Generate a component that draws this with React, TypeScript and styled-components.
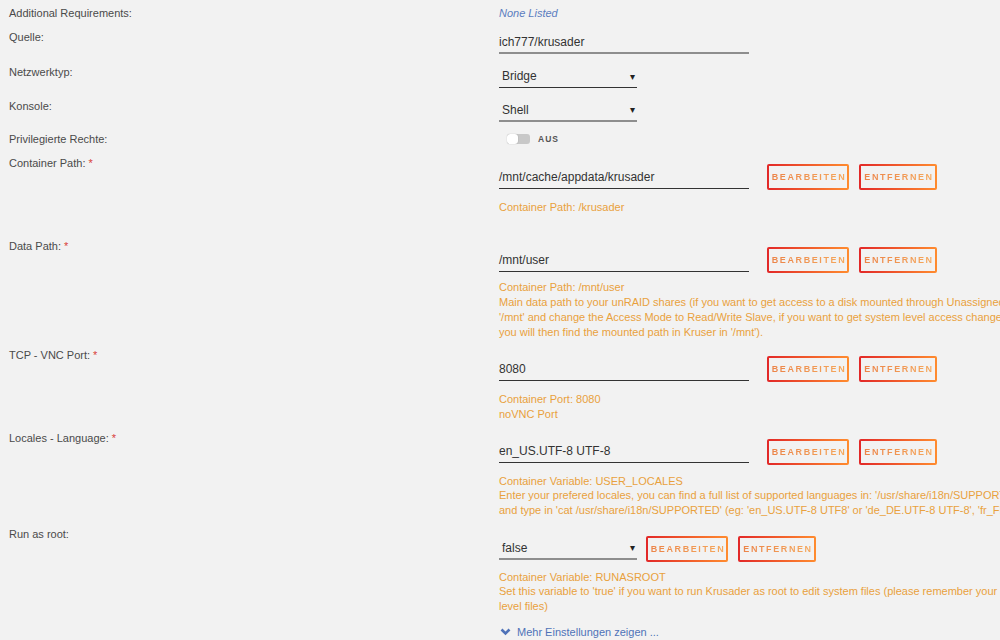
import React from 'react'
import styled, { createGlobalStyle } from 'styled-components'

const GlobalStyle = createGlobalStyle`
    html, body {
        margin: 0;
        padding: 0;
        background: #f2f2f2;
        overflow: hidden;
    }
    body {
        font-family: "Liberation Sans", Arial, sans-serif;
        color: #4f4f4f;
    }
`

const Page = styled.div`
    width: 1000px;
    height: 640px;
    overflow: hidden;
    padding: 6px 0 0 9px;
    box-sizing: border-box;
    display: flex;
    flex-direction: column;
`

const Row = styled.div<{ $space?: number }>`
    display: grid;
    grid-template-columns: 490px 1fr;
    align-items: start;
    margin-bottom: ${p => p.$space ?? 10}px;
`

const Label = styled.div`
    font-size: 11px;
    line-height: 14px;
    color: #4a4a4a;
    white-space: nowrap;
`

const Required = styled.span`
    color: #d9403a;
    margin-left: 3px;
`

const Content = styled.div<{ $offset?: number }>`
    display: flex;
    flex-direction: column;
    padding-top: ${p => p.$offset ?? 0}px;
    min-width: 0;
`

const Controls = styled.div<{ $gap?: number }>`
    display: flex;
    align-items: center;
    gap: ${p => p.$gap ?? 18}px;
`

const Muted = styled.div`
    font-size: 11px;
    line-height: 14px;
    font-style: italic;
    color: #5b7dc0;
`

const TextField = styled.div<{ $width?: number, $soft?: boolean }>`
    width: ${p => p.$width ?? 250}px;
    height: 23px;
    box-sizing: border-box;
    display: flex;
    align-items: center;
    font-size: 12px;
    color: #333;
    border-bottom: ${p => p.$soft ? '2px solid #8e8e8e' : '1px solid #333'};
    white-space: nowrap;
`

const SelectField = styled(TextField)`
    padding: 0 2px 0 3px;
    justify-content: space-between;
    &::after {
        content: "▾";
        font-size: 10px;
        color: #222;
    }
`

const Buttons = styled.div`
    display: flex;
    gap: 10px;
`

const Button = styled.div<{ $width: number }>`
    width: ${p => p.$width}px;
    height: 26px;
    box-sizing: border-box;
    display: flex;
    align-items: center;
    justify-content: center;
    border: 2px solid transparent;
    border-radius: 2px;
    background:
        linear-gradient(#f2f2f2, #f2f2f2) padding-box,
        linear-gradient(90deg, #e22828 0, #ff8c2f) border-box;
    font-size: 9px;
    font-weight: bold;
    letter-spacing: 1.6px;
    padding-left: 2px;
    span {
        background: linear-gradient(90deg, #ec8448 0, #f5a85c 100%);
        -webkit-background-clip: text;
        background-clip: text;
        color: transparent;
    }
`

const Switch = styled.div`
    display: flex;
    align-items: center;
    gap: 8px;
    padding-left: 8px;
    height: 14px;
`

const Track = styled.div`
    width: 23px;
    height: 10px;
    border-radius: 3px;
    background: #c8c8c8;
    position: relative;
    &::before {
        content: "";
        position: absolute;
        left: 0;
        top: 0;
        width: 11px;
        height: 10px;
        border-radius: 3px;
        background: #fff;
        box-shadow: 0 0 1px rgba(0, 0, 0, 0.35);
    }
`

const SwitchText = styled.span`
    font-size: 8.5px;
    font-weight: bold;
    letter-spacing: 1px;
    color: #555;
`

const Description = styled.div<{ $lift?: number }>`
    margin-top: ${p => 10 - (p.$lift ?? 0)}px;
    font-size: 11px;
    line-height: 14.7px;
    color: #e9a13d;
    white-space: nowrap;
`

const MoreLink = styled.div`
    display: flex;
    align-items: center;
    gap: 6px;
    margin-left: 491px;
    font-size: 11px;
    line-height: 14px;
    color: #4f72b8;
`

const Edit = () => (
    <Buttons>
        <Button $width={82}><span>BEARBEITEN</span></Button>
        <Button $width={78}><span>ENTFERNEN</span></Button>
    </Buttons>
)

type Entry = {
    label: string
    value: string
    lines: string[]
    space?: number
    lift?: number
}

const entries: Entry[] = [
    {
        label: 'Container Path:',
        value: '/mnt/cache/appdata/krusader',
        lines: ['Container Path: /krusader', '\u00a0'],
    },
    {
        label: 'Data Path:',
        value: '/mnt/user',
        lift: 3,
        space: 9,
        lines: [
            'Container Path: /mnt/user',
            "Main data path to your unRAID shares (if you want to get access to a disk mounted through Unassigned Devices change the path to",
            "'/mnt' and change the Access Mode to Read/Write Slave, if you want to get system level access change the path to '/'),",
            "you will then find the mounted path in Kruser in '/mnt').",
        ],
    },
    {
        label: 'TCP - VNC Port:',
        value: '8080',
        space: 9,
        lines: ['Container Port: 8080', 'noVNC Port'],
    },
    {
        label: 'Locales - Language:',
        value: 'en_US.UTF-8 UTF-8',
        lift: 1,
        space: 9,
        lines: [
            'Container Variable: USER_LOCALES',
            "Enter your prefered locales, you can find a full list of supported languages in: '/usr/share/i18n/SUPPORTED' (simply open up a console",
            "and type in 'cat /usr/share/i18n/SUPPORTED' (eg: 'en_US.UTF-8 UTF8' or 'de_DE.UTF-8 UTF-8', 'fr_FR.UTF-8 UTF-8')",
        ],
    },
]

const Chevron = () => (
    <svg width="11" height="8" viewBox="0 0 11 8">
        <polyline points="1.5,1.5 5.5,5.5 9.5,1.5" fill="none" stroke="#4f72b8" strokeWidth="2.6" />
    </svg>
)

export default function App() {
    return (
        <>
            <GlobalStyle />
            <Page>
                <Row>
                    <Label>Additional Requirements:</Label>
                    <Muted>None Listed</Muted>
                </Row>
                <Row $space={11}>
                    <Label>Quelle:</Label>
                    <Content $offset={1}>
                        <TextField $soft>ich777/krusader</TextField>
                    </Content>
                </Row>
                <Row $space={11}>
                    <Label>Netzwerktyp:</Label>
                    <Content>
                        <SelectField $width={138}>Bridge</SelectField>
                    </Content>
                </Row>
                <Row $space={10}>
                    <Label>Konsole:</Label>
                    <Content>
                        <SelectField $width={138} $soft>Shell</SelectField>
                    </Content>
                </Row>
                <Row $space={10}>
                    <Label>Privilegierte Rechte:</Label>
                    <Switch>
                        <Track />
                        <SwitchText>AUS</SwitchText>
                    </Switch>
                </Row>
                {entries.map(e => (
                    <Row key={e.label} $space={e.space}>
                        <Label>{e.label}<Required>*</Required></Label>
                        <Content $offset={8}>
                            <Controls>
                                <TextField>{e.value}</TextField>
                                <Edit />
                            </Controls>
                            <Description $lift={e.lift}>
                                {e.lines.map((l, i) => <div key={i}>{l}</div>)}
                            </Description>
                        </Content>
                    </Row>
                ))}
                <Row $space={11}>
                    <Label>Run as root:</Label>
                    <Content $offset={9}>
                        <Controls $gap={9}>
                            <SelectField $width={138} $soft>false</SelectField>
                            <Edit />
                        </Controls>
                        <Description $lift={2}>
                            <div>Container Variable: RUNASROOT</div>
                            <div>Set this variable to 'true' if you want to run Krusader as root to edit system files (please remember your changes can damage system</div>
                            <div>level files)</div>
                        </Description>
                    </Content>
                </Row>
                <MoreLink>
                    <Chevron />
                    Mehr Einstellungen zeigen ...
                </MoreLink>
            </Page>
        </>
    )
}
